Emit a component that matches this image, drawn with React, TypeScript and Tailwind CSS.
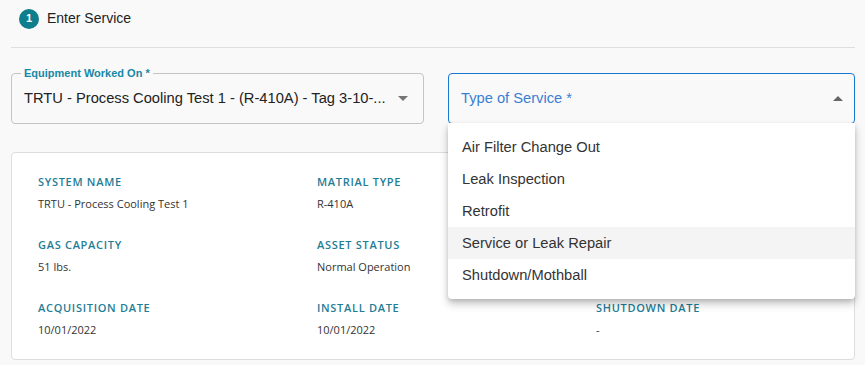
import { useState } from "react";

const services = [
  "Air Filter Change Out",
  "Leak Inspection",
  "Retrofit",
  "Service or Leak Repair",
  "Shutdown/Mothball",
];

const details = [
  { label: "SYSTEM NAME", value: "TRTU - Process Cooling Test 1" },
  { label: "MATRIAL TYPE", value: "R-410A" },
  { label: "", value: "" },
  { label: "GAS CAPACITY", value: "51 lbs." },
  { label: "ASSET STATUS", value: "Normal Operation" },
  { label: "", value: "" },
  { label: "ACQUISITION DATE", value: "10/01/2022" },
  { label: "INSTALL DATE", value: "10/01/2022" },
  { label: "SHUTDOWN DATE", value: "-" },
];

export default function App() {
  const [hovered, setHovered] = useState(3);

  return (
    <div className="w-[865px] h-[365px] bg-[#f9f9f9] overflow-hidden font-[family-name:Liberation_Sans,Arial,sans-serif]">
      {/* step header */}
      <div className="flex items-center h-[37px] pl-[19px] gap-2">
        <span className="w-5 h-5 rounded-full bg-[#0e7d8c] text-white text-[11px] font-bold flex items-center justify-center">
          1
        </span>
        <span className="text-[14px] text-[#222]">Enter Service</span>
      </div>
      <div className="ml-[11px] mr-[10px] h-px bg-[#dedede] mt-[10px]" />

      {/* fields */}
      <div className="grid grid-cols-2 gap-[30px] pl-[11px] pr-[10px] mt-[25px]">
        <fieldset className="h-[57px] border border-[#c4c4c4] rounded-[4px] pl-[9px] pr-[12px] -mt-[6px]">
          <legend className="px-[3px] text-[11px] font-bold text-[#1788a6] leading-[12px]">
            Equipment Worked On *
          </legend>
          <div className="flex items-center h-[38px] pl-[3px]">
            <span className="flex-1 truncate text-[14.7px] text-[#222]">
              TRTU - Process Cooling Test 1 - (R-410A) - Tag 3-10-...
            </span>
            <svg width="10" height="5" viewBox="0 0 10 5" className="ml-3 mr-[3px]">
              <path d="M0 0 L10 0 L5 5 Z" fill="#757575" />
            </svg>
          </div>
        </fieldset>

        <div className="relative">
          <div className="h-[51px] border border-[#1976d2] rounded-[4px] flex items-center pl-[12px] pr-[11px]">
            <span className="flex-1 text-[14.7px] text-[#3b7fd4]">Type of Service *</span>
            <svg width="10" height="5" viewBox="0 0 10 5">
              <path d="M0 5 L10 5 L5 0 Z" fill="#666" />
            </svg>
          </div>
          <ul className="absolute z-10 left-0 right-0 top-[50px] bg-white rounded-b-[4px] py-2 shadow-[0_5px_8px_rgba(0,0,0,0.22),0_2px_4px_rgba(0,0,0,0.12)]">
            {services.map((s, i) => (
              <li
                key={s}
                onMouseEnter={() => setHovered(i)}
                className={`h-[32px] flex items-center px-[14px] text-[14.7px] text-[#333] ${
                  hovered === i ? "bg-[#f4f4f4]" : ""
                }`}
              >
                {s}
              </li>
            ))}
          </ul>
        </div>
      </div>

      {/* asset card */}
      <div className="ml-[11px] mr-[10px] mt-[28px] h-[208px] bg-white border border-[#dddddd] rounded-[4px] pl-[26px] pt-[21px] font-[family-name:Open_Sans,sans-serif]">
        <div className="grid grid-cols-[279px_279px_1fr] gap-y-[24px]">
          {details.map((d, i) => (
            <div key={i} className="h-[39px]">
              <div className="text-[11px] font-semibold tracking-[0.7px] text-[#1f7d96] leading-[15px]">
                {d.label}
              </div>
              <div className="text-[11px] text-[#333] mt-[7px] leading-[15px]">{d.value}</div>
            </div>
          ))}
        </div>
      </div>
    </div>
  );
}
